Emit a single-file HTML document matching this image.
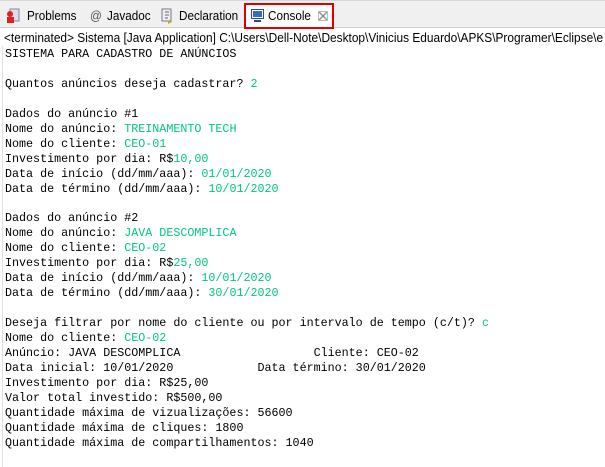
<!DOCTYPE html>
<html><head><meta charset="utf-8"><style>
html,body{margin:0;padding:0;width:605px;height:467px;overflow:hidden;background:#fff;}
.tabs{position:absolute;left:0;top:0;width:605px;height:28px;background:#f0f0f0;border-top:1px solid #d8d8d8;border-bottom:1px solid #d0d0d0;box-sizing:border-box;}
.tab{position:absolute;top:7px;font:13px "Liberation Sans",sans-serif;color:#000;transform:scaleX(0.9);transform-origin:0 0;}
.red{position:absolute;left:244px;top:2px;width:90px;height:26px;border:2px solid #e00000;box-sizing:border-box;background:#fff;}
.info{position:absolute;left:4px;top:31px;font:12.5px "Liberation Sans",sans-serif;white-space:nowrap;color:#000;transform:scaleX(0.95);transform-origin:0 0;}
.vl{position:absolute;left:2px;top:46px;width:1px;height:421px;background:#e0e0e0;}
pre{position:absolute;left:5px;top:47px;margin:0;font:11.7px/14.95px "Liberation Mono",monospace;color:#000;}
.g{color:#00c87d;}
</style></head><body>
<div class="tabs">
<div class="red"></div>
<svg style="position:absolute;left:6px;top:7px" width="14" height="16"><rect x="4" y="1" width="9" height="12" fill="#dde" stroke="#889"/><circle cx="4" cy="6" r="3" fill="#d22"/><rect x="1" y="9" width="7" height="6" fill="#d22"/></svg>
<div class="tab" style="left:27px">Problems</div>
<div class="tab" style="left:90px;color:#555">@</div>
<div class="tab" style="left:107px">Javadoc</div>
<svg style="position:absolute;left:160px;top:7px" width="14" height="16"><rect x="2" y="1" width="9" height="12" fill="#eee" stroke="#778"/><path d="M5 4h4M5 7h4M5 10h3" stroke="#668"/><path d="M8 12l4 2-4 2z" fill="#d9a020"/></svg>
<div class="tab" style="left:179px">Declaration</div>
<svg style="position:absolute;left:251px;top:8px" width="13" height="13"><rect x="0.5" y="0.5" width="12" height="9" fill="#fff" stroke="#2a4a8a"/><rect x="2" y="2" width="9" height="6" fill="#3a6ab8"/><rect x="3" y="11" width="7" height="2" fill="#2a4a8a"/></svg>
<div class="tab" style="left:268px">Console</div>
<svg style="position:absolute;left:318px;top:10px" width="10" height="10"><path d="M1 1l8 8M9 1l-8 8" stroke="#888" stroke-width="1.3"/><rect x="0.5" y="0.5" width="9" height="9" fill="none" stroke="#bbb"/></svg>
</div>
<div class="info">&lt;terminated&gt; Sistema [Java Application] C:\Users\Dell-Note\Desktop\Vinicius Eduardo\APKS\Programer\Eclipse\e</div>
<div class="vl"></div>
<pre>SISTEMA PARA CADASTRO DE ANÚNCIOS

Quantos anúncios deseja cadastrar? <span class="g">2</span>

Dados do anúncio #1
Nome do anúncio: <span class="g">TREINAMENTO TECH</span>
Nome do cliente: <span class="g">CEO-01</span>
Investimento por dia: R$<span class="g">10,00</span>
Data de início (dd/mm/aaa): <span class="g">01/01/2020</span>
Data de término (dd/mm/aaa): <span class="g">10/01/2020</span>

Dados do anúncio #2
Nome do anúncio: <span class="g">JAVA DESCOMPLICA</span>
Nome do cliente: <span class="g">CEO-02</span>
Investimento por dia: R$<span class="g">25,00</span>
Data de início (dd/mm/aaa): <span class="g">10/01/2020</span>
Data de término (dd/mm/aaa): <span class="g">30/01/2020</span>

Deseja filtrar por nome do cliente ou por intervalo de tempo (c/t)? <span class="g">c</span>
Nome do cliente: <span class="g">CEO-02</span>
Anúncio: JAVA DESCOMPLICA                   Cliente: CEO-02
Data inicial: 10/01/2020            Data término: 30/01/2020
Investimento por dia: R$25,00
Valor total investido: R$500,00
Quantidade máxima de vizualizações: 56600
Quantidade máxima de cliques: 1800
Quantidade máxima de compartilhamentos: 1040
</pre>
</body></html>
